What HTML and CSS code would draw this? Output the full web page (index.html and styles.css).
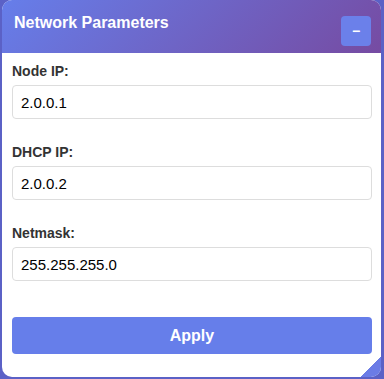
FILE: index.html
```html
<html>
<head>
	<title>Network Parameters</title>
	<meta http-equiv="Content-Type" content="text/html; charset=utf-8" />
	<link rel="stylesheet" href="styles.css">
</head>
<body>

<div class="panel">
	<div class="panel-head">
		<h3 class="panel-title">Network Parameters</h3>
		<button class="btn-min">&minus;</button>
	</div>
	<div class="panel-body">
		<div class="field">
			<label class="field-label">Node IP:</label>
			<input class="field-input" type="text" value="2.0.0.1" />
		</div>
		<div class="field">
			<label class="field-label">DHCP IP:</label>
			<input class="field-input" type="text" value="2.0.0.2" />
		</div>
		<div class="field">
			<label class="field-label">Netmask:</label>
			<input class="field-input" type="text" value="255.255.255.0" />
		</div>
		<button class="btn-apply">Apply</button>
	</div>
</div>

</body>
</html>
```

FILE: styles.css
```css
html, body {
	margin: 0;
	height: 100%;
}
body {
	background: #5b61c6;
	font-family: "Liberation Sans", Arial, sans-serif;
	padding: 0 3px 0 2px;
	box-sizing: border-box;
}

.panel {
	position: relative;
	background: #fff;
	border-radius: 10px;
	height: 377px;
	overflow: hidden;
}

.panel::after {
	content: "";
	position: absolute;
	right: 0;
	bottom: 0;
	width: 20px;
	height: 20px;
	background: linear-gradient(135deg, transparent 50%, #6b7ce6 50%);
}

.panel-head {
	display: flex;
	justify-content: space-between;
	align-items: flex-start;
	height: 53px;
	box-sizing: border-box;
	padding: 13px 10px 0 12px;
	background: linear-gradient(135deg, #667eea 0%, #764ba2 100%);
}

.panel-title {
	margin: 0;
	color: #fff;
	font-size: 16px;
	line-height: 20px;
	font-weight: bold;
}

.btn-min {
	margin-top: 3px;
	width: 30px;
	height: 30px;
	border: none;
	border-radius: 4px;
	background: #6b80ea;
	color: #fff;
	font-family: "Liberation Sans", Arial, sans-serif;
	font-size: 14px;
	font-weight: bold;
	padding: 0;
}

.panel-body {
	padding: 10px 9px 0 10px;
}

.field {
	margin-bottom: 25px;
}

.field-label {
	display: block;
	color: #333;
	font-size: 14px;
	line-height: 17px;
	font-weight: bold;
	margin-bottom: 5px;
}

.field-input {
	display: block;
	width: 100%;
	box-sizing: border-box;
	height: 34px;
	padding: 7px 8px;
	border: 1px solid #ddd;
	border-radius: 4px;
	font-family: "Liberation Sans", Arial, sans-serif;
	font-size: 15px;
	color: #000;
	background: #fff;
}

.btn-apply {
	display: block;
	width: 100%;
	height: 37px;
	margin-top: 36px;
	border: none;
	border-radius: 4px;
	background: #667eea;
	color: #fff;
	font-family: "Liberation Sans", Arial, sans-serif;
	font-size: 16px;
	font-weight: bold;
}
```
